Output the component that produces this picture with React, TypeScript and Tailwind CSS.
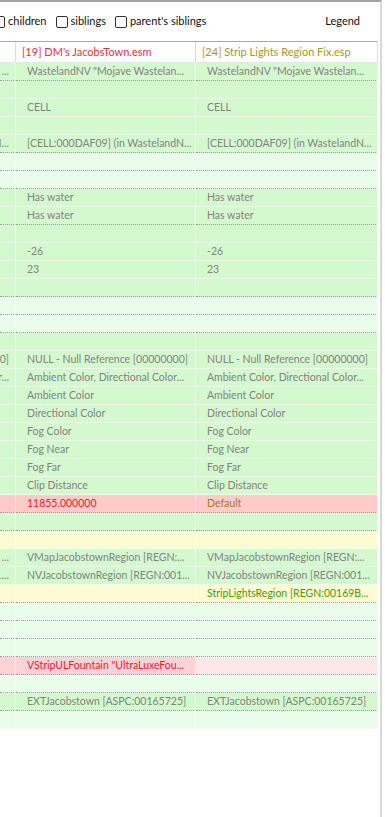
import React from "react";

type Tone = "g" | "l" | "y" | "r" | "p" | "pl";
type Ink = "gray" | "red" | "olive" | "green";

interface Cell {
  tone: Tone;
  text?: string;
  ink?: Ink;
}

interface Row {
  cells: [Cell, Cell, Cell];
  dotted?: boolean;
}

const toneBg: Record<Tone, string> = {
  g: "bg-[#d5f9cf]",
  l: "bg-[#eafdea]",
  y: "bg-[#fdfbd3]",
  r: "bg-[#ffcaca]",
  p: "bg-[#ffd3d6]",
  pl: "bg-[#ffe6e8]",
};

const inkColor: Record<Ink, string> = {
  gray: "text-[#828282]",
  red: "text-[#e8202e]",
  olive: "text-[#a07c1c]",
  green: "text-[#4e9a06]",
};

const same = (text?: string, tone: Tone = "g", edge?: string): [Cell, Cell, Cell] => [
  { tone, text: edge },
  { tone, text },
  { tone, text },
];

const rows: Row[] = [
  { cells: same('WastelandNV "Mojave Wastelan...', "g", "..."), dotted: true },
  { cells: same() },
  { cells: same("CELL") },
  { cells: same() },
  { cells: same("[CELL:000DAF09] (in WastelandN...", "g", "N..."), dotted: true },
  { cells: same(undefined, "l"), dotted: true },
  { cells: same(undefined, "l"), dotted: true },
  { cells: same("Has water") },
  { cells: same("Has water"), dotted: true },
  { cells: same() },
  { cells: same("-26") },
  { cells: same("23") },
  { cells: same(), dotted: true },
  { cells: same(undefined, "l"), dotted: true },
  { cells: same(undefined, "l"), dotted: true },
  { cells: same() },
  { cells: same("NULL - Null Reference [00000000]", "g", "0]") },
  { cells: same("Ambient Color, Directional Color...", "g", "r...") },
  { cells: same("Ambient Color") },
  { cells: same("Directional Color") },
  { cells: same("Fog Color") },
  { cells: same("Fog Near") },
  { cells: same("Fog Far") },
  { cells: same("Clip Distance") },
  {
    cells: [
      { tone: "r" },
      { tone: "r", text: "11855.000000", ink: "red" },
      { tone: "r", text: "Default", ink: "olive" },
    ],
    dotted: true,
  },
  { cells: same(), dotted: true },
  { cells: same(undefined, "y") },
  { cells: same("VMapJacobstownRegion [REGN:...", "g", "...") },
  { cells: same("NVJacobstownRegion [REGN:001...", "g", "1...") },
  {
    cells: [
      { tone: "y" },
      { tone: "y" },
      { tone: "y", text: "StripLightsRegion [REGN:00169B...", ink: "green" },
    ],
    dotted: true,
  },
  { cells: same(undefined, "l"), dotted: true },
  { cells: same(undefined, "l"), dotted: true },
  { cells: same(undefined, "l"), dotted: true },
  {
    cells: [
      { tone: "p" },
      { tone: "p", text: 'VStripULFountain "UltraLuxeFou...', ink: "red" },
      { tone: "pl" },
    ],
    dotted: true,
  },
  { cells: same(undefined, "l"), dotted: true },
  { cells: same("EXTJacobstown [ASPC:00165725]"), dotted: true },
  { cells: same(undefined, "l") },
];

function Check({ label }: { label: string }) {
  return (
    <label className="flex items-center gap-[3px]">
      <span className="w-[12px] h-[12px] border border-[#333333] rounded-[2px] bg-white" />
      <span>{label}</span>
    </label>
  );
}

function GridCell({ cell, col, dotted }: { cell: Cell; col: number; dotted?: boolean }) {
  const base = `h-[18px] flex items-center overflow-hidden whitespace-nowrap border-r border-r-[#f2fff2] ${toneBg[cell.tone]} ${
    dotted ? "border-b border-dotted border-b-[#9c9c9c]" : "border-b border-b-[#eefdec]"
  }`;
  const ink = inkColor[cell.ink ?? "gray"];
  if (col === 0) {
    return (
      <div className={`${base} justify-end pr-[6px]`}>
        <span className={ink}>{cell.text}</span>
      </div>
    );
  }
  return (
    <div className={`${base} pl-[11px]`}>
      <span className={ink}>{cell.text}</span>
    </div>
  );
}

export default function App() {
  return (
    <div className="w-[385px] h-[817px] bg-white overflow-hidden text-[10.5px] text-[#111] font-['Lato','Liberation_Sans',sans-serif]">
      <div className="w-[382px] h-full border-t-[2px] border-t-[#a3a3a3] border-r-[2px] border-r-[#d8d8d8] flex flex-col">
        <div className="h-[39px] flex items-center shrink-0 text-[11px]">
          <div className="flex items-center gap-[9px] ml-[-7px]">
            <Check label="children" />
            <Check label="siblings" />
            <Check label="parent's siblings" />
          </div>
          <span className="ml-auto mr-[20px]">Legend</span>
        </div>
        <div className="w-[378px] border-t border-t-[#a8a8a8] border-r border-r-[#dedede]">
          <div className="grid grid-cols-[16px_180px_182px] h-[21px] bg-white border-b border-b-[#e6e6e6] text-[11px]">
            <div className="border-r border-r-[#dcdcdc]" />
            <div className="border-r border-r-[#dcdcdc] flex items-center pl-[6px] text-[#e8303a] whitespace-nowrap overflow-hidden">
              [19] DM's JacobsTown.esm
            </div>
            <div className="flex items-center pl-[6px] text-[#a8962a] whitespace-nowrap overflow-hidden">
              [24] Strip Lights Region Fix.esp
            </div>
          </div>
          {rows.map((row, i) => (
            <div key={i} className="grid grid-cols-[16px_180px_182px]">
              {row.cells.map((cell, c) => (
                <GridCell key={c} cell={cell} col={c} dotted={row.dotted} />
              ))}
            </div>
          ))}
        </div>
      </div>
    </div>
  );
}
